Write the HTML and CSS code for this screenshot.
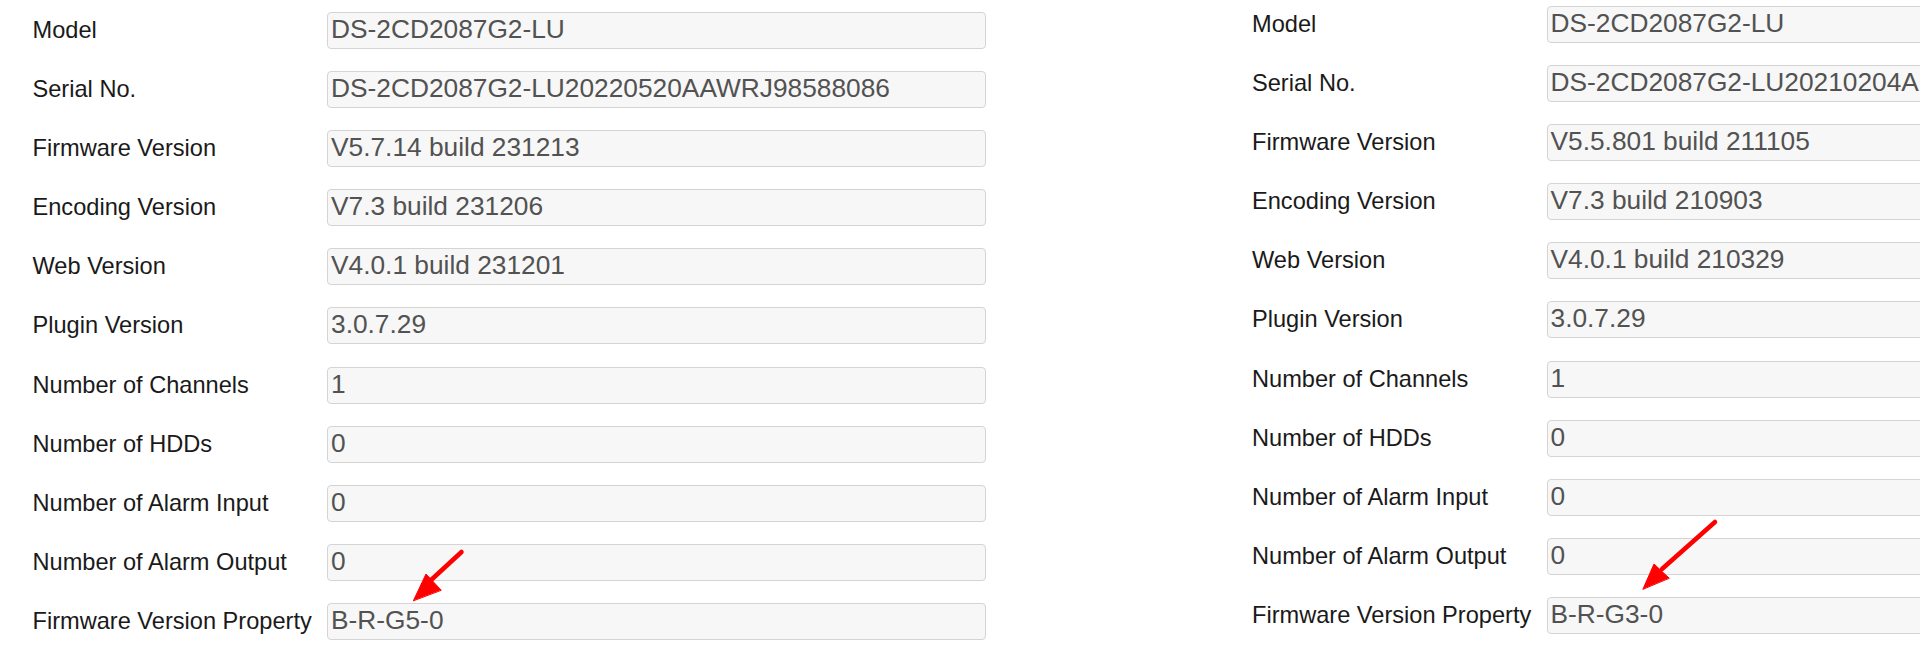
FILE: index.html
```html
<!DOCTYPE html>
<html lang="en">
<head>
<meta charset="utf-8">
<title>Device Information</title>
<link rel="stylesheet" href="styles.css">
</head>
<body>
<div class="page">
  <section class="panel panel-left">
    <div class="row"><div class="label">Model</div><div class="field">DS-2CD2087G2-LU</div></div>
    <div class="row"><div class="label">Serial No.</div><div class="field">DS-2CD2087G2-LU20220520AAWRJ98588086</div></div>
    <div class="row"><div class="label">Firmware Version</div><div class="field">V5.7.14 build 231213</div></div>
    <div class="row"><div class="label">Encoding Version</div><div class="field">V7.3 build 231206</div></div>
    <div class="row"><div class="label">Web Version</div><div class="field">V4.0.1 build 231201</div></div>
    <div class="row"><div class="label">Plugin Version</div><div class="field">3.0.7.29</div></div>
    <div class="row"><div class="label">Number of Channels</div><div class="field">1</div></div>
    <div class="row"><div class="label">Number of HDDs</div><div class="field">0</div></div>
    <div class="row"><div class="label">Number of Alarm Input</div><div class="field">0</div></div>
    <div class="row"><div class="label">Number of Alarm Output</div><div class="field">0</div></div>
    <div class="row"><div class="label">Firmware Version Property</div><div class="field">B-R-G5-0</div></div>
  </section>
  <section class="panel panel-right">
    <div class="row"><div class="label">Model</div><div class="field">DS-2CD2087G2-LU</div></div>
    <div class="row"><div class="label">Serial No.</div><div class="field">DS-2CD2087G2-LU20210204A</div></div>
    <div class="row"><div class="label">Firmware Version</div><div class="field">V5.5.801 build 211105</div></div>
    <div class="row"><div class="label">Encoding Version</div><div class="field">V7.3 build 210903</div></div>
    <div class="row"><div class="label">Web Version</div><div class="field">V4.0.1 build 210329</div></div>
    <div class="row"><div class="label">Plugin Version</div><div class="field">3.0.7.29</div></div>
    <div class="row"><div class="label">Number of Channels</div><div class="field">1</div></div>
    <div class="row"><div class="label">Number of HDDs</div><div class="field">0</div></div>
    <div class="row"><div class="label">Number of Alarm Input</div><div class="field">0</div></div>
    <div class="row"><div class="label">Number of Alarm Output</div><div class="field">0</div></div>
    <div class="row"><div class="label">Firmware Version Property</div><div class="field">B-R-G3-0</div></div>
  </section>
  <svg class="arrows" width="1920" height="648" viewBox="0 0 1920 648" aria-hidden="true">
    <g fill="#ff0000" stroke="#ff0000" stroke-linecap="round">
      <line x1="461.5" y1="552" x2="430" y2="581" stroke-width="4.5"/>
      <polygon points="413.5,600.5 426,574 441,590" stroke-width="1" stroke-linejoin="round"/>
      <line x1="1715" y1="522" x2="1662" y2="569" stroke-width="4.5"/>
      <polygon points="1643,589 1654,564 1669,578" stroke-width="1" stroke-linejoin="round"/>
    </g>
  </svg>
</div>
</body>
</html>
```
FILE: styles.css
```css
html, body {
  margin: 0;
  padding: 0;
  background: #ffffff;
}

.page {
  position: relative;
  width: 1920px;
  height: 648px;
  overflow: hidden;
  display: grid;
  grid-template-columns: 1219.5px 1fr;
  font-family: "Liberation Sans", Arial, sans-serif;
}

.panel {
  display: flex;
  flex-direction: column;
  gap: 22.1px;
  padding-left: 32.5px;
  min-width: 0;
}

.panel-left {
  padding-top: 12px;
}

.panel-right {
  padding-top: 6px;
}

.row {
  display: flex;
  align-items: center;
  height: 37px;
  flex: none;
}

.label {
  width: 294.5px;
  flex: none;
  font-size: 23.6px;
  color: #1a1a1a;
  white-space: nowrap;
}

.field {
  box-sizing: border-box;
  width: 659px;
  height: 37px;
  flex: none;
  border: 1.5px solid #d4d4d4;
  border-radius: 4px;
  background: #f7f7f7;
  padding: 0 0 2px 3px;
  font-size: 26.3px;
  line-height: 33px;
  color: #525252;
  white-space: nowrap;
  overflow: hidden;
}

.arrows {
  position: absolute;
  left: 0;
  top: 0;
  pointer-events: none;
}
```
